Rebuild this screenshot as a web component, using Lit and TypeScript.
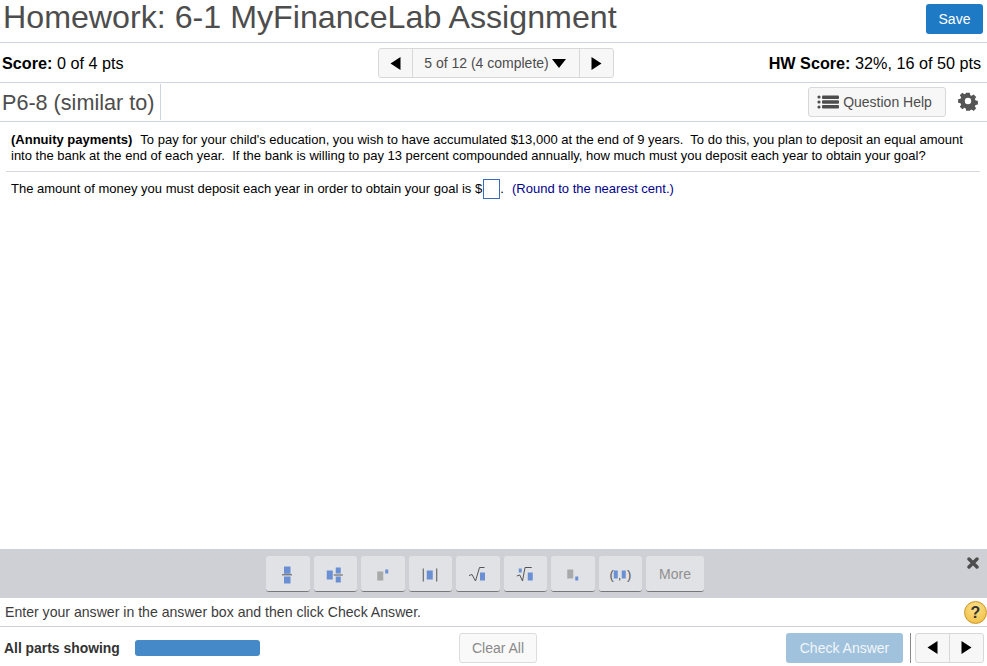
import { LitElement, html, css, svg } from "lit";
import { customElement } from "lit/decorators.js";

const L = html`<svg width="11" height="13" viewBox="0 0 11 13"><path d="M10.5 0v13L0.5 6.5z" fill="#000"/></svg>`;
const R = html`<svg width="11" height="13" viewBox="0 0 11 13"><path d="M0.5 0v13l10-6.5z" fill="#000"/></svg>`;
const B = "#6a8fd3";
const G = "#a9a9a9";
const K = "#555";
const icons = [
  svg`<rect x="6" y="2.5" width="6.500" height="7.300" fill="${B}"/><rect x="4" y="10.300" width="10" height="1" fill="${K}"/><rect x="6" y="12.500" width="6.500" height="7" fill="${B}"/>`,
  svg`<rect x="1.750" y="6.500" width="6" height="9" fill="${B}"/><rect x="10.750" y="3.500" width="5" height="6" fill="${B}"/><rect x="8.750" y="10.500" width="9" height="1" fill="${K}"/><rect x="10.750" y="12.500" width="5" height="6" fill="${B}"/>`,
  svg`<rect x="4.250" y="7.500" width="6" height="9" fill="${G}"/><rect x="12.250" y="5.500" width="3" height="4" fill="${B}"/>`,
  svg`<rect x="2.750" y="4.500" width="1" height="13" fill="${K}"/><rect x="6.750" y="6.500" width="6" height="9" fill="${B}"/><rect x="16.250" y="4.500" width="1" height="13" fill="${K}"/>`,
  svg`<path d="M1 11.500L4 10.500L7.500 17L11.500 3.500H16.500" fill="none" stroke="${K}" stroke-width="1"/><rect x="12" y="8.500" width="5" height="8" fill="${B}"/>`,
  svg`<rect x="3.750" y="4.500" width="3" height="4" fill="${B}"/><path d="M1.750 12L4.750 11L7.500 17L10 3.500H16.750" fill="none" stroke="${K}" stroke-width="1"/><rect x="12.750" y="8.500" width="5" height="8" fill="${B}"/>`,
  svg`<rect x="4.250" y="5.500" width="6" height="9" fill="${G}"/><rect x="12.250" y="12.500" width="3" height="4" fill="${B}"/>`,
];

@customElement("app-root")
export class AppRoot extends LitElement {
  static styles = css`
    :host { display: flex; flex-direction: column; width: 987px; height: 666px; overflow: hidden; background: #fff; font-family: "Liberation Sans", Arial, sans-serif; color: #000; }
    .head { height: 42px; flex: none; display: flex; align-items: center; justify-content: space-between; padding: 0 4px 0 3px; border-bottom: 1px solid #ced3df; }
    h1 { margin: 0 0 8px; font-size: 32.2px; font-weight: 400; color: #4d4d4d; line-height: 36px; white-space: nowrap; }
    .save { width: 57px; height: 30px; box-sizing: border-box; border-radius: 3px; background: #1f7ac5; color: #fff; font-size: 14px; display: flex; align-items: center; justify-content: center; margin-bottom: 5px; }
    .score { height: 39px; flex: none; display: grid; grid-template-columns: 376px 236px 1fr; align-items: center; padding: 0 6px 0 2px; border-bottom: 1px solid #ced3df; font-size: 16.2px; line-height: 20px; }
    .score .t { padding-top: 1px; }
    .score .r { text-align: right; }
    .pager { height: 30px; box-sizing: border-box; display: flex; border: 1px solid #d8d8d8; border-radius: 3px; background: #f7f7f7; color: #4d4d4d; font-size: 14px; margin-top: 1px; }
    .pager > div { display: flex; align-items: center; justify-content: center; }
    .pager .arrow { width: 33px; }
    .pager .m { flex: 1; border-left: 1px solid #d8d8d8; border-right: 1px solid #d8d8d8; gap: 3px; padding-right: 2px; }
    .sub { height: 38px; flex: none; display: flex; align-items: center; border-bottom: 1px solid #ced3df; padding: 0 9px 0 2px; }
    .sub h2 { margin: 0; font-size: 21.6px; font-weight: 400; color: #4d4d4d; width: 158px; height: 36px; line-height: 37px; border-right: 1px solid #ced3df; white-space: nowrap; }
    .qh { margin-left: auto; width: 138px; height: 30px; box-sizing: border-box; border: 1px solid #d8d8d8; border-radius: 3px; background: #f7f7f7; color: #4d4d4d; font-size: 14px; display: flex; align-items: center; justify-content: center; gap: 4px; padding-right: 5px; }
    .gear { margin-left: 12px; width: 20px; height: 20px; margin-bottom: 2px; }
    .body { flex: 1; padding: 10px 7px 0 11px; font-size: 13px; line-height: 16px; min-height: 0; }
    .q { padding-bottom: 7px; border-bottom: 1px solid #d5d8df; margin-left: -5px; padding-left: 5px; white-space: pre; }
    .q b { margin-right: 1px; }
    .line { margin-top: 7px; white-space: pre; display: flex; align-items: center; }
    .box { display: inline-block; width: 15px; height: 18px; margin: 0 0 -1px 1px; border: 1px solid #3c68bd; flex: none; }
    .note { color: #00008b; margin-left: 1px; }
    .tools { height: 49px; flex: none; box-sizing: border-box; background: #cfd0d6; display: flex; gap: 4px; padding: 7px 0 0 266px; position: relative; }
    .tb { width: 43.5px; height: 36px; box-sizing: border-box; background: #e1e2e5; border-radius: 3px; border-bottom: 1px solid #777; display: flex; align-items: center; justify-content: center; }
    .tb.more { width: 58px; color: #8f8f8f; font-size: 14px; }
    .x { position: absolute; left: 967px; top: 8px; width: 12px; height: 12px; }
    .hint { height: 28px; flex: none; display: flex; align-items: center; justify-content: space-between; padding: 0 0 0 5px; border-bottom: 1px solid #ced0d8; font-size: 14.1px; color: #3c3c3c; }
    .help { width: 23px; height: 23px; border-radius: 50%; box-sizing: border-box; border: 1px solid #c8952a; background: radial-gradient(circle at 50% 30%, #fbe28c, #f0b93a); color: #333; font-weight: 700; font-size: 16px; display: flex; align-items: center; justify-content: center; margin-top: 1px; }
    .foot { height: 39px; flex: none; box-sizing: border-box; display: flex; align-items: center; padding: 2px 3px 0 4px; }
    .foot > * { flex: none; }
    .foot b { font-size: 13.9px; color: #333; width: 131px; }
    .bar { width: 125px; height: 16px; border-radius: 3px; background: #4589c8; }
    .clear { margin-left: 199px; width: 78px; height: 30px; box-sizing: border-box; border: 1px solid #dcdcdc; border-radius: 3px; background: #f9f9f9; color: #8a8a8a; font-size: 14px; display: flex; align-items: center; justify-content: center; }
    .check { margin-left: 249px; width: 117px; height: 30px; border-radius: 3px; background: #a0c2dd; color: #f2f6fa; font-size: 14px; display: flex; align-items: center; justify-content: center; }
    .sep { width: 1px; height: 30px; background: #888; margin: 0 4px 0 7px; }
    .nav { width: 69px; height: 30px; box-sizing: border-box; border: 1px solid #d8d8d8; border-radius: 3px; background: #f7f7f7; display: flex; }
    .nav div { flex: 1; display: flex; align-items: center; justify-content: center; }
    .nav div + div { border-left: 1px solid #d8d8d8; }
  `;

  render() {
    return html`
      <div class="head"><h1>Homework: 6-1 MyFinanceLab Assignment</h1><div class="save">Save</div></div>
      <div class="score">
        <div class="t"><b>Score:</b> 0 of 4 pts</div>
        <div class="pager">
          <div class="arrow">${L}</div>
          <div class="m">5 of 12 (4 complete)<svg width="14" height="9" viewBox="0 0 14 9"><path d="M0 0h14L7 9z" fill="#000"/></svg></div>
          <div class="arrow">${R}</div>
        </div>
        <div class="r t"><b>HW Score:</b> 32%, 16 of 50 pts</div>
      </div>
      <div class="sub">
        <h2>P6-8 (similar to)</h2>
        <div class="qh">
          <svg width="22" height="14" viewBox="0 0 22 14" fill="#4d4d4d"><circle cx="2" cy="2" r="1.6"/><circle cx="2" cy="7" r="1.6"/><circle cx="2" cy="12" r="1.6"/><rect x="5" y="0.5" width="17" height="3.4" rx="1"/><rect x="5" y="5.3" width="17" height="3.4" rx="1"/><rect x="5" y="10.1" width="17" height="3.4" rx="1"/></svg>
          Question Help
        </div>
        <svg class="gear" viewBox="0 0 20 20"><path fill="#555" fill-rule="evenodd" d="M8 1h4l.5 2.6 1.6.7 2.2-1.5 2.8 2.8-1.5 2.2.7 1.6 2.7.6v4l-2.7.5-.7 1.6 1.5 2.2-2.8 2.8-2.2-1.5-1.6.7L12 21H8l-.5-2.6-1.6-.7-2.2 1.5-2.8-2.8 1.5-2.2-.7-1.6L-1 12.100V8.100l2.700-.5.7-1.600L.9 3.800 3.700 1l2.200 1.500 1.600-.7z" transform="translate(1 .9) scale(.9)"/><circle cx="10" cy="10" r="3.200" fill="#fff"/></svg>
      </div>
      <div class="body">
        <div class="q"><b>(Annuity payments)</b>  To pay for your child's education, you wish to have accumulated $13,000 at the end of 9 years.  To do this, you plan to deposit an equal amount
into the bank at the end of each year.  If the bank is willing to pay 13 percent compounded annually, how much must you deposit each year to obtain your goal?</div>
        <div class="line"><span>The amount of money you must deposit each year in order to obtain your goal is $</span><span class="box"></span><span>.  </span><span class="note">(Round to the nearest cent.)</span></div>
      </div>
      <div class="tools">
        ${icons.map((i) => html`<div class="tb"><svg width="20" height="20" viewBox="0 0 20 20">${i}</svg></div>`)}
        <div class="tb"><svg width="22" height="20" viewBox="0 0 22 20"><text x="0.5" y="14.5" font-size="13" fill="#555" font-family="Liberation Sans">(</text><rect x="4.750" y="6.500" width="4" height="8" fill="${B}"/><rect x="12.750" y="6.500" width="4" height="8" fill="${B}"/><rect x="10.250" y="14" width="1" height="2.500" fill="#555"/><text x="18" y="14.5" font-size="13" fill="#555" font-family="Liberation Sans">)</text></svg></div>
        <div class="tb more">More</div>
        <svg class="x" viewBox="0 0 12 12"><path d="M2 2l8 8M10 2l-8 8" stroke="#4d4d4d" stroke-width="3.400" stroke-linecap="round"/></svg>
      </div>
      <div class="hint"><span>Enter your answer in the answer box and then click Check Answer.</span><div class="help">?</div></div>
      <div class="foot">
        <b>All parts showing</b>
        <div class="bar"></div>
        <div class="clear">Clear All</div>
        <div class="check">Check Answer</div>
        <div class="sep"></div>
        <div class="nav"><div>${L}</div><div>${R}</div></div>
      </div>
    `;
  }
}
